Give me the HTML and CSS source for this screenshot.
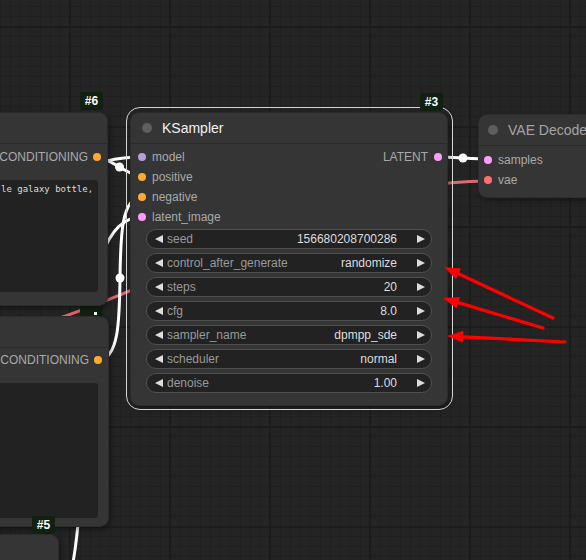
FILE: index.html
```html
<!DOCTYPE html>
<html>
<head>
<meta charset="utf-8">
<link rel="stylesheet" href="styles.css">
</head>
<body>
<div class="canvas">
  <svg class="wires" width="586" height="560" viewBox="0 0 586 560">
    <path class="wire red" d="M60,318 C220,262 330,182 488,181"/>
    <path class="wire" d="M-40,190 C60,190 80,157 142,157"/>
    <path class="wire" d="M97,157 C108,157 131,177 142,177"/>
    <path class="wire" d="M98,360 C140,360 100,197 142,197"/>
    <path class="wire" d="M20,640 C130,640 38,217 142,217"/>
    <path class="wire" d="M438,157 C450,157 476,159 488,159"/>
    <circle cx="119.5" cy="167" r="4.5" fill="#fff"/>
    <circle cx="120" cy="278" r="4.5" fill="#fff"/>
    <circle cx="463" cy="158" r="4.5" fill="#fff"/>
  </svg>

  <div class="badge badge-cut"><span class="cut-dot"></span></div>

  <div class="node node6">
    <div class="badge badge6">#6</div>
    <div class="title"></div>
    <div class="out-row"><span class="slot-label">CONDITIONING</span><span class="dot orange"></span></div>
    <div class="textbox text6">le galaxy bottle,</div>
  </div>

  <div class="node node7">
    <div class="title"></div>
    <div class="out-row"><span class="slot-label">CONDITIONING</span><span class="dot orange"></span></div>
    <div class="textbox text7"></div>
  </div>

  <div class="node node5">
    <div class="badge badge5">#5</div>
  </div>

  <div class="node ksampler">
    <div class="badge badge3">#3</div>
    <div class="title">
      <span class="title-dot"></span>
      <span class="title-text selected">KSampler</span>
    </div>
    <div class="slots">
      <div class="inputs">
        <div class="in-row"><span class="dot purple"></span><span class="slot-label">model</span></div>
        <div class="in-row"><span class="dot orange"></span><span class="slot-label">positive</span></div>
        <div class="in-row"><span class="dot orange"></span><span class="slot-label">negative</span></div>
        <div class="in-row"><span class="dot pink"></span><span class="slot-label">latent_image</span></div>
      </div>
      <div class="outputs">
        <div class="out-row ks-out"><span class="slot-label">LATENT</span><span class="dot pink"></span></div>
      </div>
    </div>
    <div class="widgets">
      <div class="widget"><span class="arr-l"></span><span class="w-label">seed</span><span class="w-value">156680208700286</span><span class="arr-r"></span></div>
      <div class="widget"><span class="arr-l"></span><span class="w-label">control_after_generate</span><span class="w-value">randomize</span><span class="arr-r"></span></div>
      <div class="widget"><span class="arr-l"></span><span class="w-label">steps</span><span class="w-value">20</span><span class="arr-r"></span></div>
      <div class="widget"><span class="arr-l"></span><span class="w-label">cfg</span><span class="w-value">8.0</span><span class="arr-r"></span></div>
      <div class="widget"><span class="arr-l"></span><span class="w-label">sampler_name</span><span class="w-value">dpmpp_sde</span><span class="arr-r"></span></div>
      <div class="widget"><span class="arr-l"></span><span class="w-label">scheduler</span><span class="w-value">normal</span><span class="arr-r"></span></div>
      <div class="widget"><span class="arr-l"></span><span class="w-label">denoise</span><span class="w-value">1.00</span><span class="arr-r"></span></div>
    </div>
  </div>

  <div class="node vae">
    <div class="title vae-title">
      <span class="title-dot"></span>
      <span class="title-text">VAE Decode</span>
    </div>
    <div class="inputs vae-inputs">
      <div class="in-row"><span class="dot pink"></span><span class="slot-label">samples</span></div>
      <div class="in-row"><span class="dot red"></span><span class="slot-label">vae</span></div>
    </div>
  </div>

  <svg class="arrows" width="586" height="560" viewBox="0 0 586 560">
    <line x1="553" y1="318" x2="458.5" y2="273.8"/>
    <polygon points="444,267 461,268.4 456,279.2"/>
    <line x1="543" y1="328" x2="458.3" y2="302.6"/>
    <polygon points="443,298 460,296.9 456.6,308.4"/>
    <line x1="565" y1="342" x2="463" y2="336.8"/>
    <polygon points="447,336 463.3,330.8 462.7,342.8"/>
  </svg>
</div>
</body>
</html>
```

FILE: styles.css
```css
* { box-sizing: border-box; }

body {
  margin: 0;
  background: #232323;
}

.canvas {
  position: relative;
  width: 586px;
  height: 560px;
  overflow: hidden;
  background-color: #242424;
  background-image:
    linear-gradient(to right, #1c1c1c 2px, transparent 2px),
    linear-gradient(to bottom, #1c1c1c 2px, transparent 2px),
    linear-gradient(to right, #202020 1px, transparent 1px),
    linear-gradient(to bottom, #202020 1px, transparent 1px);
  background-size: 100px 100px, 100px 100px, 10px 10px, 10px 10px;
  background-position: 69px 0, 0 26px, 0 0, 0 6px;
  font-family: "Liberation Sans", Arial, sans-serif;
  font-size: 12px;
}

.wires, .arrows {
  position: absolute;
  left: 0;
  top: 0;
}

.wire {
  fill: none;
  stroke: #ffffff;
  stroke-width: 3;
}

.wire.red {
  stroke: #e0676d;
  stroke-width: 3;
}

.arrows line {
  stroke: #ff0000;
  stroke-width: 3.2;
  stroke-linecap: round;
}

.arrows polygon {
  fill: #ff0000;
}

.node {
  position: absolute;
  background: #353535;
  border-radius: 8px;
  box-shadow: 0 0 0 1px #2c2c2c, 2px 3px 6px rgba(0, 0, 0, 0.45);
  display: flex;
  flex-direction: column;
}

.title {
  height: 31px;
  flex: none;
  display: flex;
  align-items: center;
  border-bottom: 1px solid #2a2a2a;
}

.title-dot {
  width: 10px;
  height: 10px;
  border-radius: 50%;
  background: #5e5e5e;
  margin-left: 11px;
  flex: none;
}

.title-text {
  margin-left: 10px;
  font-size: 14px;
  color: #a8a8a8;
}

.title-text.selected {
  color: #f2f2f2;
}

.dot {
  width: 8px;
  height: 8px;
  border-radius: 50%;
  flex: none;
}

.orange { background: #ffa931; }
.purple { background: #b39ddb; }
.pink { background: #ff9cf9; }
.red { background: #ff6e6e; }

.slot-label {
  color: #a9a9a9;
  font-size: 12px;
  line-height: 14px;
}

.out-row {
  height: 20px;
  display: flex;
  align-items: center;
  justify-content: flex-end;
  gap: 5px;
}

.in-row {
  height: 20px;
  display: flex;
  align-items: center;
  gap: 6px;
}

.badge {
  position: absolute;
  background: #112111;
  color: #ffffff;
  font-weight: bold;
  font-size: 12px;
  height: 18px;
  width: 23px;
  border-radius: 3px;
  display: flex;
  align-items: center;
  justify-content: center;
}

/* node #6 (left top) */
.node6 {
  left: -30px;
  top: 113px;
  width: 137px;
  height: 192px;
}

.node6 .out-row {
  margin-top: 3px;
  padding-right: 6px;
}

.badge6 {
  right: 4px;
  top: -21px;
}

.textbox {
  background: #222222;
  border-radius: 3px;
  margin-right: 9px;
  font-family: "DejaVu Sans Mono", "Liberation Mono", monospace;
  font-size: 9px;
  color: #dddddd;
  padding: 4px 0 0 0;
  white-space: nowrap;
  overflow: hidden;
}

.text6 {
  margin-top: 13px;
  height: 112px;
  padding-left: 31px;
}

/* node #7 (left bottom) */
.node7 {
  left: -30px;
  top: 317px;
  width: 138px;
  height: 209px;
}

.node7 .out-row {
  margin-top: 2px;
  padding-right: 6px;
}

.text7 {
  margin-top: 13px;
  height: 135px;
  margin-right: 10px;
}

/* node #5 (bottom) */
.node5 {
  left: -30px;
  top: 535px;
  width: 88px;
  height: 40px;
}

.badge5 {
  right: 3px;
  top: -19px;
}

/* partially hidden badge */
.badge-cut {
  left: 80px;
  top: 305px;
  width: 23px;
  height: 12px;
  border-radius: 0;
}

.cut-dot {
  position: absolute;
  left: 14px;
  top: 7px;
  width: 3px;
  height: 3px;
  background: #ffffff;
}

/* KSampler */
.ksampler {
  left: 131px;
  top: 113px;
  width: 316px;
  height: 292px;
}

.ksampler::before {
  content: "";
  position: absolute;
  left: -5px;
  top: -6px;
  right: -6px;
  bottom: -5px;
  border: 1.5px solid #d4d4d4;
  border-radius: 14px;
  pointer-events: none;
}

.badge3 {
  right: 4px;
  top: -20px;
}

.slots {
  display: flex;
  justify-content: space-between;
  padding-top: 3px;
}

.inputs {
  display: flex;
  flex-direction: column;
  padding-left: 7px;
}

.ks-out {
  padding-right: 5px;
  gap: 6px;
}

.widgets {
  display: flex;
  flex-direction: column;
  gap: 4px;
  margin: 2px 15px 0 15px;
}

.widget {
  height: 20px;
  background: #222222;
  border: 1px solid #505050;
  border-radius: 10px;
  display: flex;
  align-items: center;
  padding: 0 6px 0 8px;
}

.arr-l {
  width: 0;
  height: 0;
  border-top: 4.5px solid transparent;
  border-bottom: 4.5px solid transparent;
  border-right: 8px solid #dddddd;
  flex: none;
}

.arr-r {
  width: 0;
  height: 0;
  border-top: 4.5px solid transparent;
  border-bottom: 4.5px solid transparent;
  border-left: 8px solid #dddddd;
  flex: none;
  margin-left: 20px;
}

.w-label {
  color: #999999;
  margin-left: 4px;
  flex: 1;
}

.w-value {
  color: #dddddd;
}

/* VAE Decode */
.vae {
  left: 479px;
  top: 115px;
  width: 150px;
  height: 82px;
}

.vae-title .title-dot {
  margin-left: 9px;
}

.vae-title .title-text {
  margin-left: 10px;
  color: #a4a4a4;
}

.vae-inputs {
  padding-top: 4px;
  padding-left: 5px;
}
```
